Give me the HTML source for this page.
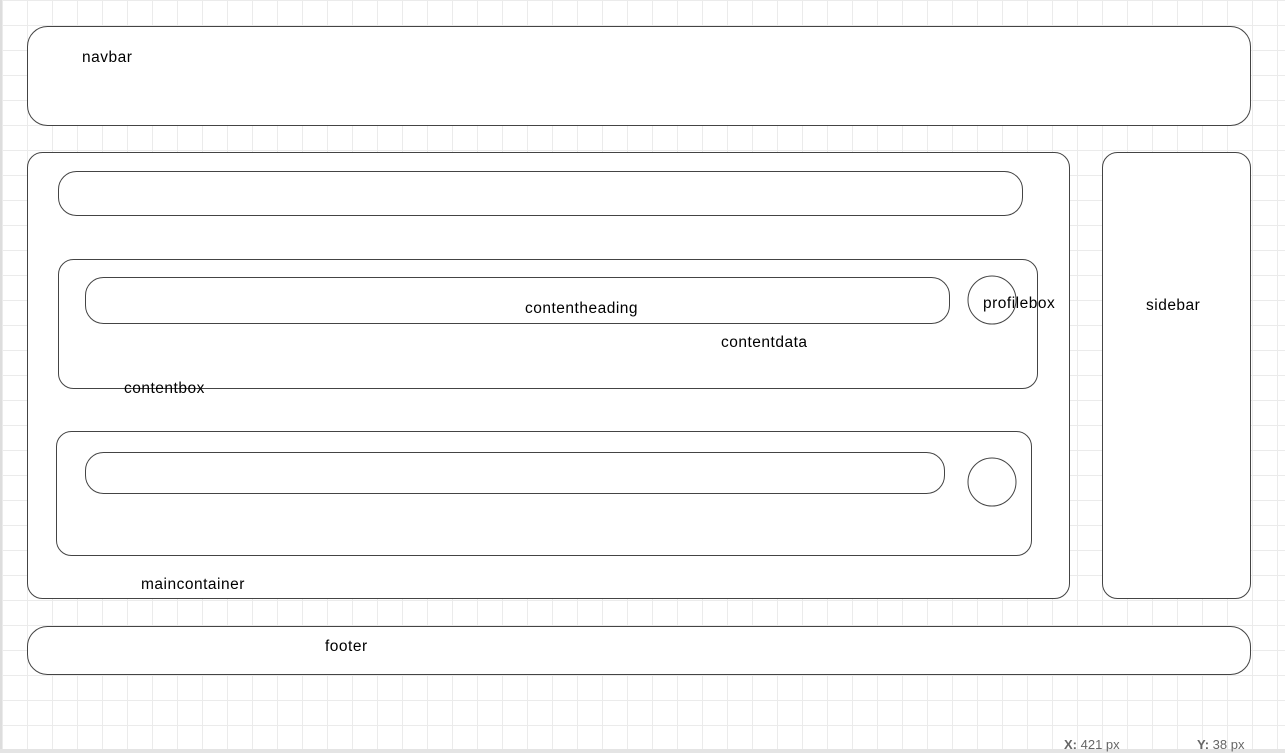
<!DOCTYPE html>
<html><head><meta charset="utf-8"><style>
html,body{margin:0;padding:0;width:1285px;height:753px;overflow:hidden;background:#fff}
svg{display:block}
text{font-family:"Liberation Sans",sans-serif;font-size:15.5px;letter-spacing:0.5px;fill:#000}
</style></head><body>
<svg width="1285" height="753" xmlns="http://www.w3.org/2000/svg">
<defs>
<pattern id="g" x="2" y="0" width="25" height="25" patternUnits="userSpaceOnUse">
<path d="M0.5 0V25M0 0.5H25" stroke="#ebebeb" stroke-width="1" fill="none"/>
</pattern>
</defs>
<rect x="0" y="0" width="1285" height="753" fill="url(#g)"/>
<rect x="0" y="0" width="2" height="753" fill="#ddd"/>
<rect x="0" y="749" width="1285" height="4" fill="#e4e4e4"/>
<g fill="#fff" stroke="#444" stroke-width="1">
<rect x="27.5" y="26.5" width="1223" height="99" rx="20"/>
<rect x="27.5" y="152.5" width="1042" height="446" rx="15"/>
<rect x="1102.5" y="152.5" width="148" height="446" rx="15"/>
<rect x="27.5" y="626.5" width="1223" height="48" rx="20"/>
<rect x="58.5" y="171.5" width="964" height="44" rx="18"/>
<rect x="58.5" y="259.5" width="979" height="129" rx="15"/>
<rect x="85.5" y="277.5" width="864" height="46" rx="18"/>
<circle cx="992" cy="300" r="24"/>
<rect x="56.5" y="431.5" width="975" height="124" rx="15"/>
<rect x="85.5" y="452.5" width="859" height="41" rx="18"/>
<circle cx="992" cy="482" r="24"/>
</g>
<text x="82" y="62">navbar</text>
<text x="525" y="313">contentheading</text>
<text x="983" y="308">profilebox</text>
<text x="721" y="347">contentdata</text>
<text x="124" y="393">contentbox</text>
<text x="1146" y="310">sidebar</text>
<text x="141" y="589">maincontainer</text>
<text x="325" y="651">footer</text>
<text x="1064" y="749" style="font-size:13px;letter-spacing:0;fill:#666"><tspan font-weight="bold">X:</tspan> 421 px</text>
<text x="1197" y="749" style="font-size:13px;letter-spacing:0;fill:#666"><tspan font-weight="bold">Y:</tspan> 38 px</text>
</svg>
</body></html>
